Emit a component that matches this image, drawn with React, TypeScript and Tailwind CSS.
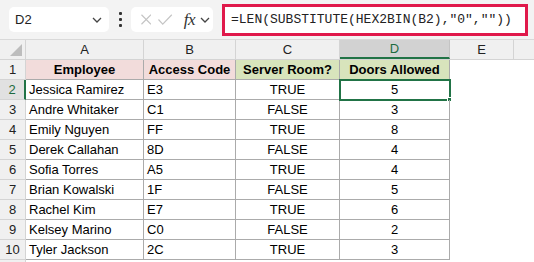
import React from "react";

const cols = [
  { key: "A", w: "w-[118px]" },
  { key: "B", w: "w-[92px]" },
  { key: "C", w: "w-[104px]" },
  { key: "D", w: "w-[110px]" },
  { key: "E", w: "w-[64px]" },
];

const rows = [
  ["Jessica Ramirez", "E3", "TRUE", "5"],
  ["Andre Whitaker", "C1", "FALSE", "3"],
  ["Emily Nguyen", "FF", "TRUE", "8"],
  ["Derek Callahan", "8D", "FALSE", "4"],
  ["Sofia Torres", "A5", "TRUE", "4"],
  ["Brian Kowalski", "1F", "FALSE", "5"],
  ["Rachel Kim", "E7", "TRUE", "6"],
  ["Kelsey Marino", "C0", "FALSE", "2"],
  ["Tyler Jackson", "2C", "TRUE", "3"],
];

function Chevron() {
  return (
    <svg width="10" height="6" viewBox="0 0 10 6" fill="none">
      <path d="M1 1l4 4 4-4" stroke="#444" strokeWidth="1.3" />
    </svg>
  );
}

function FormulaBar() {
  return (
    <div className="flex h-[40px] items-center bg-[#f3f3f3] border-b border-[#d9d9d9] pl-[9px]">
      <div className="flex h-[25px] w-[100px] items-center justify-between rounded-[5px] bg-white pl-[6px] pr-[7px] text-[13px] text-[#222]">
        <span>D2</span>
        <Chevron />
      </div>
      <div className="flex w-[22px] flex-col items-center gap-[3px]">
        <div className="h-[3px] w-[3px] rounded-[1px] bg-[#333]" />
        <div className="h-[3px] w-[3px] rounded-[1px] bg-[#333]" />
        <div className="h-[3px] w-[3px] rounded-[1px] bg-[#333]" />
      </div>
      <div className="flex h-[25px] w-[82px] items-center rounded-[5px] bg-white pl-[10px] pr-[3px]">
        <svg width="11" height="11" viewBox="0 0 11 11" fill="none">
          <path d="M0.5 0.5l10 10M10.5 0.5l-10 10" stroke="#c4c4c4" strokeWidth="1.2" />
        </svg>
        <svg className="ml-[7px]" width="15" height="11" viewBox="0 0 15 11" fill="none">
          <path d="M0.5 5.5l4.5 4.8L14.5 0.5" stroke="#c4c4c4" strokeWidth="1.2" />
        </svg>
        <span className="ml-[11px] text-[17px] leading-none italic text-[#333] [font-family:'Liberation_Serif',serif] tracking-[-0.5px]">
          fx
        </span>
        <span className="ml-[5px]">
          <Chevron />
        </span>
      </div>
      <div className="ml-[9px] flex h-[32px] w-[306px] items-center border-[3px] border-[#e0194b] bg-white pl-[6px] text-[13px] text-[#222] [font-family:'Liberation_Mono',monospace]">
        =LEN(SUBSTITUTE(HEX2BIN(B2),"0",""))
      </div>
    </div>
  );
}

function ColumnHeaders() {
  return (
    <div className="flex h-[20px] bg-[#f0f0f0] border-b border-[#d4d4d4] text-[13px] text-[#222]">
      <div className="relative w-[26px] border-r border-[#d4d4d4]">
        <svg className="absolute left-[10px] top-[4px]" width="12" height="12" viewBox="0 0 12 12">
          <path d="M12 0V12H0Z" fill="#bdbdbd" />
        </svg>
      </div>
      {cols.map((c) =>
        c.key === "D" ? (
          <div
            key={c.key}
            className={`${c.w} flex items-center justify-center bg-[#d2d2d2] border-r border-[#c4c4c4] border-b-2 border-b-[#217346] text-[#1e6b3f]`}
          >
            {c.key}
          </div>
        ) : (
          <div key={c.key} className={`${c.w} flex items-center justify-center border-r border-[#d4d4d4]`}>
            {c.key}
          </div>
        )
      )}
      <div className="flex-1" />
    </div>
  );
}

export default function App() {
  return (
    <div className="h-[262px] w-[534px] overflow-hidden bg-white [font-family:'Liberation_Sans',Arial,sans-serif]">
      <FormulaBar />
      <ColumnHeaders />
      <div className="flex h-[20px] text-[13px]">
        <div className="flex w-[26px] items-center justify-center bg-[#f0f0f0] border-r border-b border-[#d4d4d4] text-[#222]">
          1
        </div>
        <div className="flex w-[118px] items-center justify-center bg-[#f2dcdb] border-r border-b border-[#ababab] font-bold text-black">
          Employee
        </div>
        <div className="flex w-[92px] items-center justify-center bg-[#f2dcdb] border-r border-b border-[#ababab] font-bold text-black">
          Access Code
        </div>
        <div className="flex w-[104px] items-center justify-center bg-[#d8e4bc] border-r border-b border-[#ababab] font-bold text-black">
          Server Room?
        </div>
        <div className="flex w-[110px] items-center justify-center bg-[#d8e4bc] border-r border-b border-[#ababab] font-bold text-black">
          Doors Allowed
        </div>
      </div>
      {rows.map((r, i) => {
        const sel = i === 0;
        return (
          <div key={i} className="flex h-[20px] text-[13px] text-black">
            <div
              className={`flex w-[26px] items-center justify-center border-b border-[#d4d4d4] ${
                sel
                  ? "bg-[#e1e1e1] border-r-2 border-r-[#217346] text-[#1e6b3f]"
                  : "bg-[#f0f0f0] border-r border-r-[#d4d4d4] text-[#222]"
              }`}
            >
              {i + 2}
            </div>
            <div className="flex w-[118px] items-center border-r border-b border-[#ababab] pl-[3px]">{r[0]}</div>
            <div className="flex w-[92px] items-center border-r border-b border-[#ababab] pl-[3px]">{r[1]}</div>
            <div className="flex w-[104px] items-center justify-center border-r border-b border-[#ababab]">{r[2]}</div>
            <div
              className={`relative flex w-[110px] items-center justify-center border-r border-b border-[#ababab] ${
                sel ? "outline-2 -outline-offset-1 outline-[#217346]" : ""
              }`}
            >
              {r[3]}
              {sel && (
                <div className="absolute bottom-[-3px] right-[-3px] h-[5px] w-[5px] bg-[#217346] border border-white" />
              )}
            </div>
          </div>
        );
      })}
      <div className="flex h-[20px]">
        <div className="w-[26px] bg-[#f0f0f0] border-r border-[#d4d4d4]" />
      </div>
    </div>
  );
}
